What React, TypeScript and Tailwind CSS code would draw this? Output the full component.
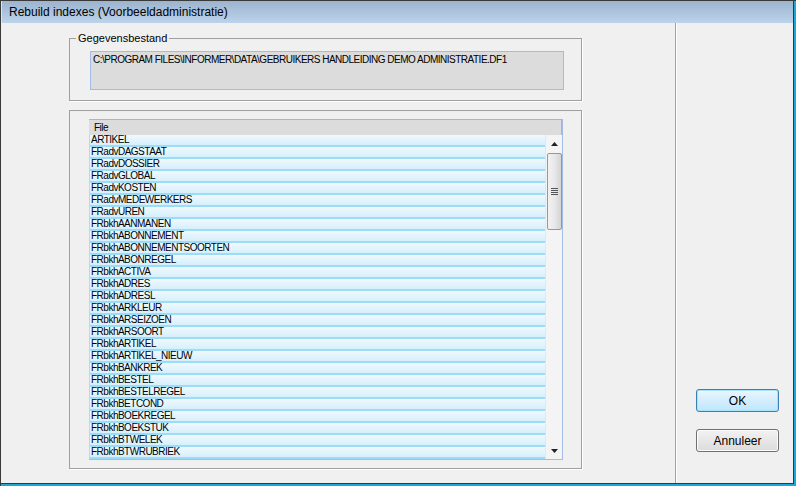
import React from 'react';

const files = [
  'ARTIKEL',
  'FRadvDAGSTAAT',
  'FRadvDOSSIER',
  'FRadvGLOBAL',
  'FRadvKOSTEN',
  'FRadvMEDEWERKERS',
  'FRadvUREN',
  'FRbkhAANMANEN',
  'FRbkhABONNEMENT',
  'FRbkhABONNEMENTSOORTEN',
  'FRbkhABONREGEL',
  'FRbkhACTIVA',
  'FRbkhADRES',
  'FRbkhADRESL',
  'FRbkhARKLEUR',
  'FRbkhARSEIZOEN',
  'FRbkhARSOORT',
  'FRbkhARTIKEL',
  'FRbkhARTIKEL_NIEUW',
  'FRbkhBANKREK',
  'FRbkhBESTEL',
  'FRbkhBESTELREGEL',
  'FRbkhBETCOND',
  'FRbkhBOEKREGEL',
  'FRbkhBOEKSTUK',
  'FRbkhBTWELEK',
  'FRbkhBTWRUBRIEK',
];

const ui = "font-['Liberation_Sans',Arial,sans-serif]";
const pix = "font-['Liberation_Sans',Arial,sans-serif] text-[10px] tracking-[-0.5px]";

const Scrollbar: React.FC = () => (
  <div className="w-[17px] bg-[#f4f4f4] border-l border-[#e6e6e6] flex flex-col items-center">
    <div className="h-[17px] w-full flex items-center justify-center">
      <svg width="7" height="4" viewBox="0 0 7 4">
        <path d="M3.5 0 L7 4 L0 4 Z" fill="#222" />
      </svg>
    </div>
    <div className="mt-[1px] h-[77px] w-[15px] rounded-[2px] border border-[#979797] bg-gradient-to-r from-[#f2f2f2] via-[#e8e8e8] to-[#d4d4d4] flex items-center justify-center">
      <div className="flex flex-col gap-[1px]">
        <div className="w-[7px] h-[1px] bg-[#555]" />
        <div className="w-[7px] h-[1px] bg-[#555]" />
        <div className="w-[7px] h-[1px] bg-[#555]" />
        <div className="w-[7px] h-[1px] bg-[#555]" />
      </div>
    </div>
    <div className="flex-1" />
    <div className="h-[17px] w-full flex items-center justify-center">
      <svg width="7" height="4" viewBox="0 0 7 4">
        <path d="M0 0 L7 0 L3.5 4 Z" fill="#222" />
      </svg>
    </div>
  </div>
);

const App: React.FC = () => {
  return (
    <div className="w-[796px] h-[486px] overflow-hidden bg-[#1ea6d6] border-t border-l border-[#3a3a3a] pr-[2px] pb-[2px]">
      <div className="w-full h-full flex flex-col border-r border-b border-[#2b3a48] bg-[#f0f0f0]">
        {/* title bar */}
        <div className="h-[22px] shrink-0 bg-gradient-to-b from-[#9db4cf] to-[#bcd3eb] flex items-center pl-[7px] border-l border-[#d8e6f4]">
          <span className={`${ui} text-[12px] text-black leading-none`}>Rebuild indexes (Voorbeeldadministratie)</span>
        </div>

        <div className="flex-1 flex min-h-0">
          {/* left panel */}
          <div className="w-[674px] shrink-0 pl-[68px] pt-[15px]">
            <div className="relative w-[513px] h-[63px] border border-[#a0a0a0] shadow-[1px_1px_0_#ffffff] pl-[20px] pt-[12px]">
              <span className={`${ui} absolute left-[6px] top-[-8px] bg-[#f0f0f0] px-[2px] text-[11px] leading-[14px] text-black`}>
                Gegevensbestand
              </span>
              <div className={`${pix} w-[474px] h-[39px] border border-[#a3bbe6] bg-[#dcdcdc] pl-[2px] pt-[2px] leading-[12px] text-black`}>
                C:\PROGRAM FILES\INFORMER\DATA\GEBRUIKERS HANDLEIDING DEMO ADMINISTRATIE.DF1
              </div>
            </div>

            <div className="mt-[9px] w-[513px] h-[359px] border border-[#a0a0a0] shadow-[1px_1px_0_#ffffff] pl-[19px] pt-[8px]">
              <div className="w-[474px] h-[341px] flex flex-col border-r border-b border-[#a3bbe6]">
                <div className="h-[16px] shrink-0 bg-[#dcdcdc] border-t border-r border-[#b4b4b4] flex items-center pl-[5px]">
                  <span className={`${pix} text-black leading-none`}>File</span>
                </div>
                <div className="flex-1 flex min-h-0">
                  <div className="flex-1 flex flex-col border-l border-[#b8d8f0]">
                    {files.map((f) => (
                      <div
                        key={f}
                        className="h-[12px] shrink-0 bg-gradient-to-b from-[#f0f9fe] to-[#d6effc] border-b-2 border-[#9bdcf6] pl-[1px] flex items-center"
                      >
                        <span className={`${pix} text-black leading-none`}>{f}</span>
                      </div>
                    ))}
                  </div>
                  <Scrollbar />
                </div>
              </div>
            </div>
          </div>

          {/* separator */}
          <div className="w-[1px] bg-[#a0a0a0]" />
          <div className="w-[1px] bg-[#ffffff]" />

          {/* right panel */}
          <div className="flex-1 flex flex-col justify-end pl-[19px] pb-[31px] gap-[17px]">
            <button className={`${ui} w-[83px] h-[23px] rounded-[3px] border border-[#3c7fb1] bg-gradient-to-b from-[#eaf6fd] to-[#bee6fd] shadow-[inset_0_0_0_1px_#a6e3fb] text-[12px] text-black`}>
              OK
            </button>
            <button className={`${ui} w-[83px] h-[23px] rounded-[3px] border border-[#707070] bg-gradient-to-b from-[#f2f2f2] to-[#dcdcdc] shadow-[inset_0_0_0_1px_#fcfcfc] text-[12px] text-black`}>
              Annuleer
            </button>
          </div>
        </div>
      </div>
    </div>
  );
};

export default App;
